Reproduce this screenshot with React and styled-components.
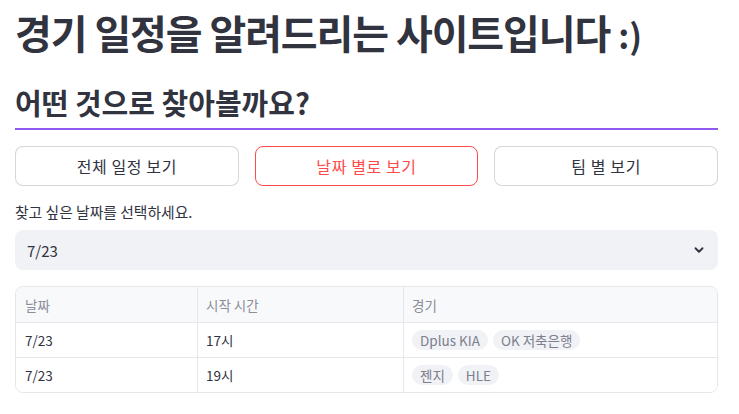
import styled, { createGlobalStyle } from "styled-components";

const GlobalStyle = createGlobalStyle`
  body {
    margin: 0;
    background: #ffffff;
    font-family: "Noto Sans CJK KR", "Noto Sans", sans-serif;
    color: rgb(49, 51, 63);
  }
`;

const Page = styled.main`
  width: 703px;
  padding: 7px 0 0 15px;
  display: flex;
  flex-direction: column;
`;

const Title = styled.h1`
  margin: 0;
  height: 50px;
  font-size: 40px;
  font-weight: 700;
  line-height: 50px;
  letter-spacing: -1.1px;
`;

const Smiley = styled.span`
  font-size: 34px;
  line-height: 1;
  letter-spacing: 0;
`;

const Subheader = styled.h2`
  margin: 25px 0 0;
  font-size: 29px;
  font-weight: 700;
  line-height: 40px;
`;

const Divider = styled.hr`
  margin: 6px 0 0;
  border: none;
  height: 2px;
  background: #9059ef;
`;

const ButtonRow = styled.div`
  display: grid;
  grid-template-columns: repeat(3, 1fr);
  gap: 16px;
  margin-top: 16px;
`;

const Button = styled.button`
  height: 40px;
  border-radius: 8px;
  border: 1px solid ${(p) => (p.$active ? "#ff4b4b" : "rgba(49, 51, 63, 0.2)")};
  background: #ffffff;
  color: ${(p) => (p.$active ? "#ff4b4b" : "rgb(49, 51, 63)")};
  font-family: inherit;
  font-size: 16px;
  letter-spacing: 0.6px;
  cursor: pointer;
`;

const Label = styled.label`
  margin-top: 16px;
  font-size: 14.8px;
  line-height: 20px;
`;

const Select = styled.div`
  margin-top: 8px;
  height: 40px;
  border-radius: 8px;
  background: #f0f2f6;
  display: flex;
  align-items: center;
  justify-content: space-between;
  padding: 0 12px;
  font-size: 15px;
`;

const Table = styled.div`
  margin-top: 16px;
  border: 1px solid #e6e7ea;
  border-radius: 8px;
  overflow: hidden;
  display: grid;
  grid-template-columns: 182px 206px 1fr;
`;

const Cell = styled.div`
  height: ${(p) => (p.$head ? "35px" : "34px")};
  display: flex;
  align-items: center;
  gap: 5px;
  padding: 0 8px;
  font-size: 13.5px;
  background: ${(p) => (p.$head ? "#f8f9fb" : "#ffffff")};
  color: ${(p) => (p.$head ? "#8b8d98" : "rgb(49, 51, 63)")};
  border-right: ${(p) => (p.$last ? "none" : "1px solid #e6e7ea")};
  border-bottom: ${(p) => (p.$bottom ? "none" : "1px solid #e6e7ea")};
  &:nth-child(3n + 1) {
    padding-left: 9px;
  }
`;

const Pill = styled.span`
  height: 20px;
  padding: 0 8px;
  border-radius: 10px;
  background: #f0f2f6;
  color: #7c7f8c;
  font-size: 13.5px;
  line-height: 20px;
`;

const Chevron = () => (
  <svg width="14" height="14" viewBox="0 0 24 24">
    <path d="M6 9l6 6 6-6" fill="none" stroke="rgb(49,51,63)" strokeWidth="3.2" strokeLinecap="round" strokeLinejoin="round" />
  </svg>
);

const rows = [
  { date: "7/23", time: "17시", teams: ["Dplus KIA", "OK 저축은행"] },
  { date: "7/23", time: "19시", teams: ["젠지", "HLE"] },
];

export default function App() {
  return (
    <>
      <GlobalStyle />
      <Page>
        <Title>
          경기 일정을 알려드리는 사이트입니다 <Smiley>:)</Smiley>
        </Title>
        <Subheader>어떤 것으로 찾아볼까요?</Subheader>
        <Divider />
        <ButtonRow>
          <Button>전체 일정 보기</Button>
          <Button $active>날짜 별로 보기</Button>
          <Button>팀 별 보기</Button>
        </ButtonRow>
        <Label>찾고 싶은 날짜를 선택하세요.</Label>
        <Select>
          <span>7/23</span>
          <Chevron />
        </Select>
        <Table>
          <Cell $head>날짜</Cell>
          <Cell $head>시작 시간</Cell>
          <Cell $head $last>경기</Cell>
          {rows.map((r, i) => {
            const bottom = i === rows.length - 1;
            return [
              <Cell key={`d${i}`} $bottom={bottom}>{r.date}</Cell>,
              <Cell key={`t${i}`} $bottom={bottom}>{r.time}</Cell>,
              <Cell key={`g${i}`} $bottom={bottom} $last>
                {r.teams.map((t) => (
                  <Pill key={t}>{t}</Pill>
                ))}
              </Cell>,
            ];
          })}
        </Table>
      </Page>
    </>
  );
}
